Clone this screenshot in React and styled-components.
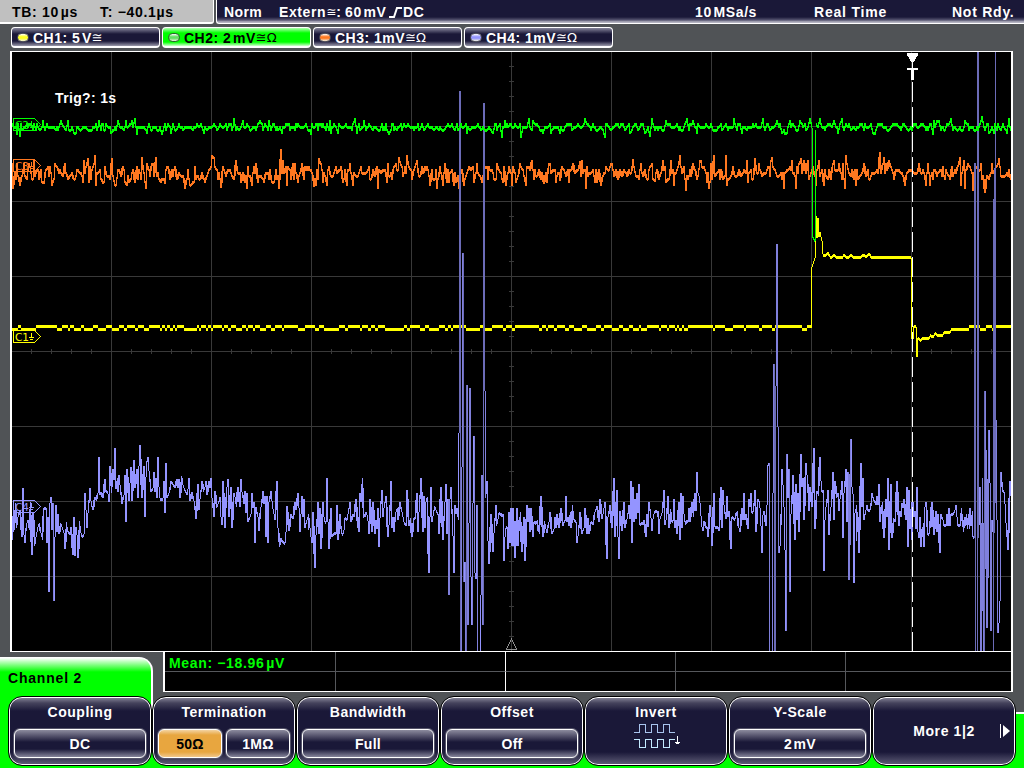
import React from "react";
import styled, { createGlobalStyle } from "styled-components";

const GlobalStyle = createGlobalStyle`
  * {
    box-sizing: border-box;
  }

  body {
    margin: 0;
    overflow: hidden;
    background: #505356;
    font-family: "Liberation Sans", Arial, sans-serif;
    font-size: 14px;
    font-weight: 700;
    color: white;
  }
`;

const Screen = styled.div`
  width: 1024px;
  height: 768px;
  background: #505356;
  display: flex;
  flex-direction: column;
  overflow: hidden;
`;

const TopBar = styled.header`
  display: flex;
  height: 24px;
  gap: 2px;
  white-space: pre;
`;

const TimeBase = styled.div`
  width: 214px;
  height: 24px;
  display: flex;
  align-items: center;
  padding: 2px 0 0 12px;
  background: #c0c0c0;
  color: black;
  border-right: 1px solid white;
  border-bottom: 2px solid white;
  border-bottom-right-radius: 3px;
`;

const Status = styled.div`
  flex: 1;
  display: flex;
  align-items: center;
  padding: 1px 0 0 7px;
  background: linear-gradient(#1a1838 17px, #565470 20px, #b5b4c2 22px);
  border-left: 1px solid white;
  border-bottom: 1px solid white;
  border-bottom-left-radius: 3px;
`;

const Item = styled.span`
  width: ${(p) => p.$w}px;
  flex: none;
  display: flex;
  align-items: center;
  letter-spacing: ${(p) => p.$ls || 0.6}px;
  line-height: 18px;
  height: 18px;
`;

const Tabs = styled.nav`
  display: flex;
  gap: 2px;
  padding: 3px 0 0 11px;
  height: 27px;
`;

const Tab = styled.div`
  width: 149px;
  height: 21px;
  display: flex;
  align-items: center;
  padding: 1px 0 0 5px;
  letter-spacing: 0.5px;
  white-space: pre;
  border: 1px solid white;
  border-bottom-width: 2px;
  border-radius: 4px;
  color: ${(p) => (p.$active ? "black" : "white")};
  background: ${(p) =>
    p.$active
      ? "linear-gradient(#b0ffb0, #00ff00 5px, #00ff00 14px, #d0ffd0)"
      : "linear-gradient(#85849a, #1a1838 6px, #1a1838 13px, #9a99ab)"};
`;

const Led = styled.i`
  width: 12px;
  height: 9px;
  margin-right: 4px;
  border: 1px solid ${(p) => (p.$active ? "#2c602c" : "#55555f")};
  border-radius: 5px;
  background: ${(p) =>
    `linear-gradient(white, ${p.$color} 40%, ${p.$color} 60%, #f0f0e0)`};
`;

const Sym = styled.span`
  font-family: "DejaVu Sans", sans-serif;
  font-weight: 400;
  font-size: ${(p) => p.$size || 13}px;
  letter-spacing: 0;
  line-height: 14px;
`;

const Display = styled.main`
  height: 601px;
  margin: 0 11px 0 10px;
  border: 2px solid white;
  border-top-width: 1px;
  border-bottom-width: 1px;
  background: black;
  position: relative;

  svg {
    display: block;
  }
`;

const Trig = styled.div`
  position: absolute;
  left: 43px;
  top: 38px;
  letter-spacing: 0.35px;
`;

const Bottom = styled.footer`
  flex: 1;
  display: flex;
  flex-direction: column;
`;

const MeasureRow = styled.div`
  display: flex;
  height: 40px;
  margin-right: 11px;
`;

const MenuTitle = styled.div`
  width: 153px;
  height: 60px;
  margin: 5px 10px 0 0;
  padding: 12px 0 0 8px;
  color: black;
  letter-spacing: 0.8px;
  border-top-right-radius: 14px;
  border-top: 1px solid white;
  border-right: 2px solid white;
  background: linear-gradient(white, #00ff00 14px);
`;

const Measures = styled.div`
  flex: 1;
  height: 40px;
  display: grid;
  grid-template-columns: 171px 170px 170px 170px 1fr;
  grid-template-rows: 20px 19px;
  background: black;
  border: 2px solid white;
  border-top: 0;
  border-bottom-width: 1px;
`;

const Cell = styled.div`
  border-right: ${(p) =>
    p.$last ? 0 : `1px solid ${p.$mid ? "white" : "#56585c"}`};
  border-bottom: ${(p) => (p.$top ? "1px solid #56585c" : 0)};
  padding: 3px 0 0 4px;
  color: #00ff00;
  letter-spacing: 0.65px;
  white-space: pre;
`;

const Menu = styled.div`
  flex: 1;
  display: flex;
  padding: 4px 0 0 8px;
  z-index: 1;
  background: linear-gradient(#00ff00, #00ff00) 0 0 / 8px 100% no-repeat,
    linear-gradient(#00ff00, #00ff00) 0 bottom / 1014px 16px no-repeat,
    linear-gradient(#505356 20px, white 20px, white 22px, #00ff00 22px) right 0 /
      10px 100% no-repeat,
    linear-gradient(#00ff00, #00ff00) 8px 0 / 143px 20px no-repeat;
`;

const Key = styled.section`
  width: 144px;
  height: 70px;
  flex: none;
  padding: 6px 5px 0;
  display: flex;
  flex-direction: column;
  align-items: center;
  border: 1px solid black;
  border-radius: 14px;
  letter-spacing: 0.55px;
  box-shadow: inset 0 0 0 1px white;
  background: linear-gradient(
    #8c8b9e,
    #45435c 6px,
    #1a1838 14px,
    #1a1838 55px,
    #62607a
  );
`;

const KeyTitle = styled.div`
  height: ${(p) => p.$h || 26}px;
  line-height: 18px;
`;

const Values = styled.div`
  display: flex;
  gap: 4px;
  width: 132px;
`;

const Value = styled.div`
  flex: 1;
  height: 29px;
  line-height: 28px;
  text-align: center;
  letter-spacing: 0.3px;
  white-space: pre;
  border: 1px solid white;
  border-radius: 6px;
  box-shadow: 0 0 0 1px #55546a;
  color: ${(p) => (p.$on ? "black" : "white")};
  background: ${(p) =>
    p.$on
      ? "linear-gradient(#f3d3a2, #e8a63f 5px, #e8a63f 22px, #f0c78b)"
      : "linear-gradient(#8c8b9e, #1a1838 12px, #1a1838 19px, #85849a)"};
`;

const More = styled.div`
  position: relative;
  width: 132px;
  height: 56px;
  line-height: 57px;
  text-align: center;
  letter-spacing: 0.6px;

  svg {
    position: absolute;
    right: 0;
    top: 20px;
  }
`;

// x,y pairs, three units to one pixel, relative to the block origin
const CH4_BLOCKS = [
  {
    x: 0,
    y: 420,
    pts: `36,360 40,265 42,330 47,250 50,325 54,290 60,270 66,350 69,203 72,345 75,370 80,310 85,300 88,330 92,245
    96,405 99,275 104,378 109,345 114,320 118,310 123,340 128,360 132,265 138,265 141,370 144,290 147,515 150,250
    153,230 156,330 159,250 162,542 165,350 168,255 171,335 174,283 177,343 182,310 187,322 192,340 195,388 199,305
    203,335 210,345 213,320 219,405 222,292 225,407 228,320 231,345 234,415 238,302 242,335 246,352 252,343 255,220
    258,270 261,325 265,265 270,203 274,255 279,270 284,230 290,243 294,220 297,112 300,225 305,215 309,235 315,176
    318,215 323,215 327,245 330,139 335,218 339,148 342,180 345,85 348,208 352,175 354,215 357,165 361,205 366,253
    372,225 375,165 378,307 381,148 387,243 390,190 393,140 396,243 402,121 405,205 411,148 414,235 417,139 420,76
    426,235 432,139 435,290 439,130 444,112 448,165 453,215 459,205 462,157 465,215 468,175 471,235 474,112 478,230
    484,243 489,235 492,184 495,280 498,130 501,235 507,220 513,184 518,190 525,205 531,176 534,205 537,176 540,235
    545,168 550,200 556,215 561,225 564,208 567,175 570,243 576,215 582,243 588,298 594,193 597,270 601,225 606,184
    610,215 615,200 618,184 621,225 627,184 630,205 633,175 636,235 642,290 645,212 650,265 655,250 660,230 663,290
    666,315 669,184 675,325 681,200 684,176 687,290 693,202 696,325 702,220 706,235 709,262 714,202 720,260 723,176
    726,215 732,253 735,212 738,280 741,220 744,307 750,290 753,283 756,220 759,265 762,247 765,370 768,260 774,290
    777,333 783,260 789,212 792,253 795,228 798,352 801,228 804,370 807,245 813,212 817,255 825,300 831,184 834,325
    838,380 843,355 849,368 856,370 858,337 861,257 867,333 873,283 879,297 885,245 888,270 894,220 898,280`,
  },
  {
    x: 300,
    y: 360,
    pts: `0,515 3,463 6,408 9,470 12,418 15,505 20,485 26,463 32,525 36,550 39,455 45,623 48,525 54,427 57,523 60,445
    63,568 69,427 73,485 78,487 81,355 84,487 87,568 93,445 96,532 101,518 108,523 111,436 114,541 120,463 125,523
    131,523 135,475 141,480 145,455 150,427 153,487 157,463 163,470 168,418 172,505 174,472 177,515 180,400 183,425
    187,355 191,475 198,455 203,470 207,523 210,418 216,515 219,427 225,523 228,480 231,508 234,445 237,560 241,445
    246,391 249,470 253,436 258,409 264,532 268,482 273,364 276,505 279,472 282,515 288,455 292,445 294,480 300,427
    306,455 312,487 318,497 321,391 327,497 332,475 336,532 342,473 347,478 351,400 354,515 358,437 363,355 369,515
    372,409 375,505 378,425 382,410 387,640 390,470 393,382 396,487 404,437 411,460 414,463 417,523 423,382 429,541
    434,445 438,373 441,523 444,418 447,704 450,418 453,382 458,490 462,640 465,436 468,463 471,445 475,480 477,220
    480,-807 483,885 486,320 489,-321 492,667 495,607 498,885 501,76 504,795 507,490 510,85 513,650 516,795 519,428
    522,229 525,640 528,658 531,436 534,885 541,885 543,706 546,346 549,795 552,-771 555,93 557,415 561,364 564,543
    567,613 573,463 579,577 583,500 588,436 590,497 598,455 604,470 609,463 612,604 616,508 621,500 624,568 627,455
    630,550 633,445 636,558 639,445 645,595 651,445 654,558 661,455 666,577 672,472 675,604 681,436 684,485 687,445
    690,515 693,445 699,532 702,485 706,495 712,480 718,523 723,409 729,532 733,482 741,520 747,487 750,455 756,523
    762,508 765,470 768,505 771,463 777,505 783,445 789,497 795,482 798,409 801,487 804,470 807,497 811,455 813,505
    817,436 822,480 828,487 831,550 835,520 840,455 846,523 852,505 855,445 861,523 864,475 867,523 873,485 880,495
    885,455 891,437 897,487`,
  },
  {
    x: 595,
    y: 430,
    pts: `15,208 21,268 30,217 36,386 39,262 45,226 51,295 57,145 60,322 66,181 69,322 72,386 75,244 81,304 87,217
    90,295 97,262 102,226 105,268 108,154 111,340 114,172 117,277 120,208 123,268 126,190 129,250 132,163 135,286
    141,277 144,286 147,270 153,322 156,253 159,290 162,217 167,250 171,304 175,255 180,244 186,244 189,260 190,244
    192,313 195,268 201,250 207,181 210,286 213,270 219,199 222,295 226,237 231,277 235,272 237,208 240,295 243,270
    246,313 252,217 255,331 258,190 261,295 264,199 268,268 272,286 276,270 279,277 282,235 285,277 291,217 296,260
    300,190 303,244 306,127 309,190 314,205 320,285 324,304 327,272 331,293 336,290 339,322 345,226 348,262 351,349
    357,190 360,290 363,295 369,290 372,304 378,172 381,295 384,181 388,240 393,268 396,199 399,260 402,244 408,358
    411,262 420,268 427,244 433,304`,
  },
  {
    x: 740,
    y: 420,
    pts: `0,335 6,265 9,299 12,220 15,299 18,282 24,326 27,238 30,262 33,220 36,280 40,275 45,211 48,335 53,238 59,245
    63,318 66,398 69,285 72,273 78,317 81,255 84,135 87,130 90,705 96,705 99,220 102,-168 105,705 107,40 111,-528
    114,20 117,398 121,370 126,148 130,210 134,310 138,632 141,103 144,235 147,148 150,515 153,282 159,166 165,361
    168,193 171,299 174,220 177,335 183,103 186,200 189,175 192,299 198,130 201,165 207,272 210,202 216,262 222,85
    225,326 230,212 236,227 240,112 243,184 246,215 249,211 252,452 255,300 258,262 264,210 267,344 273,262 279,157
    282,299 285,184 290,235 294,220 297,272 300,237 306,184 309,353 312,220 318,148 321,307 324,157 327,479 333,58
    336,200 340,230 342,488 345,280 350,256 357,398 363,130 366,262 369,175 372,299 377,275 381,256 384,272 391,270
    396,220 401,240 408,254 411,229 414,254 417,193 420,307 427,247 432,353 438,238 441,290 444,175 447,389 453,193
    456,353 460,295 465,307 471,184 477,317 480,272 483,290 486,250 489,265 492,238 498,299 501,202 504,380 507,211
    510,326 514,247 516,361 519,247 522,290 525,272 528,326 531,202 534,335 537,353 540,292 543,380 550,310 552,380
    555,260 558,247 564,344 569,343 571,262 573,320 576,247 582,344 588,274 591,335 594,283 600,398 603,283 609,300
    612,317 618,317 621,283 624,317 627,265 630,317 633,283 639,283 644,274 648,256 651,290 654,317 660,317 664,265
    667,290 670,335 675,290 677,317 680,283 683,326 686,283 688,326 690,265 693,317 697,274 699,350 702,353 704,-770
    706,-770 708,705 712,705 714,-1120 716,353 720,202 723,705 727,175 732,705 735,-87 741,623 747,30 750,190
    753,632 756,300 759,335 761,705 766,-1120 768,0 771,300 774,640 778,600 781,515 783,157 789,215 793,215 798,310
    804,389 810,184 812,228`,
  },
];

const CH4_POINTS = CH4_BLOCKS.flatMap((b) =>
  b.pts
    .trim()
    .split(/\s+/)
    .map((p) => p.split(",").map(Number))
    .map(([x, y]) => [b.x + x / 3, b.y + y / 3])
);

// one vertical bar for each pixel column that the line goes through,
// "bold" stretches the bars beside a turning point, "pad" is added at both ends
function toColumns(points, { bold = false, pad = 0 } = {}) {
  const cols = {};
  const add = (c, y) => {
    const v = cols[c] || [y, y];
    cols[c] = [Math.min(v[0], y), Math.max(v[1], y)];
  };
  for (let i = 1; i < points.length; i++) {
    const [x0, y0] = points[i - 1];
    const [x1, y1] = points[i];
    if (x1 <= x0) continue;
    const at = (x) => y0 + ((y1 - y0) * (x - x0)) / (x1 - x0);
    const last = Math.ceil(x1 - 0.01) - 1;
    for (let c = Math.floor(x0); c <= last; c++) {
      add(c, at(Math.max(c, x0)));
      add(c, at(Math.min(c + 1, x1)));
    }
    if (bold && x1 - x0 < 2.4) {
      const turn0 = i > 1 && (points[i - 2][1] - y0) * (y1 - y0) > 0;
      const turn1 =
        i + 1 < points.length && (points[i + 1][1] - y1) * (y0 - y1) > 0;
      if (turn0) add(Math.floor(x0), y0 + (y1 - y0) * 0.75);
      if (turn1) add(last, y1 - (y1 - y0) * 0.75);
    }
  }
  return Object.entries(cols).map(([c, [a, b]]) => {
    a -= pad;
    b += pad;
    if (b - a < 3) {
      const m = (a + b) / 2;
      a = m - 1.5;
      b = m + 1.5;
    }
    return [Number(c), Math.round(a), Math.round(b)];
  });
}

const toPath = (cols) =>
  cols.map(([x, a, b]) => `M${x} ${a}h1V${b}h-1z`).join("");

function random(seed) {
  let s = seed;
  return () => {
    s = (s * 1664525 + 1013904223) % 4294967296;
    return s / 4294967296;
  };
}

function noise(seed, base, spread, peaks, from = 12, to = 1011) {
  const rnd = random(seed);
  const pts = [];
  let x = from;
  while (x <= to) {
    let n = rnd() + rnd() + rnd() - 1.5;
    if (rnd() < 0.06) n *= 1.5;
    pts.push([x, base + Math.round((n * spread) / 3) * 3]);
    x += rnd() < 0.6 ? 1 : 2;
  }
  peaks.forEach(([px, py]) => {
    const i = pts.findIndex((p) => p[0] >= px);
    if (i > 0) pts[i][1] = py;
  });
  return pts;
}

const CH2_LEFT = noise(11, 127, 5, [[17, 134], [134, 119], [137, 134], [162, 134], [234, 119], [311, 134], [354, 119],
  [389, 134], [502, 137], [521, 137], [528, 119], [585, 119], [605, 137], [651, 119], [686, 119], [734, 119],
  [762, 119], [785, 134], [810, 119]], 12, 812);
const CH2_PULSE = [[812, 128], [812.9, 130], [813, 238], [815, 241], [815.2, 135], [816, 130]];
const CH2_RIGHT = noise(23, 127, 5, [[820, 119], [842, 119], [875, 134], [932, 134], [951, 119], [981, 117],
  [1008, 119]], 816);

const CH2 = [
  ...toColumns(CH2_LEFT, { pad: 1 }),
  ...toColumns(CH2_PULSE),
  ...toColumns(CH2_RIGHT, { pad: 1 }),
];

const CH3 = noise(37, 173, 12, [[13, 188], [20, 185], [43, 183], [55, 164], [88, 159], [95, 156], [103, 183],
  [112, 159], [115, 185], [165, 183], [212, 156], [221, 187], [247, 188], [272, 182], [280, 150], [314, 186],
  [319, 159], [347, 185], [378, 188], [400, 162], [407, 156], [442, 185], [459, 188], [463, 185], [516, 182],
  [544, 183], [560, 180], [580, 162], [633, 160], [654, 181], [680, 156], [686, 190], [709, 188], [714, 156],
  [726, 156], [754, 159], [800, 159], [824, 185], [845, 188], [846, 156], [880, 153], [904, 185], [925, 185],
  [957, 166], [973, 190], [984, 192], [999, 159]]);

function flat(seed, from, to, rate) {
  const rnd = random(seed);
  const cols = [];
  let x = from;
  while (x < to) {
    const low = rnd() < rate;
    const w = low ? 2 + Math.floor(rnd() * 2) : 2 + Math.floor(rnd() * 5);
    for (let i = 0; i < w && x < to; i++, x++) {
      cols.push([x, low ? 328 : 325, low ? 331 : 328]);
    }
  }
  return cols;
}

const CH1 = [
  ...flat(5, 12, 700, 0.5),
  ...flat(9, 700, 811, 0.2),
  ...toColumns([
    [811, 328], [811.9, 268], [812, 267], [813, 264], [815, 258], [815.6, 238], [816, 216], [817, 238], [818, 218],
    [819, 237], [820, 232], [821, 237], [822, 241], [823, 254],
  ]),
  ...toColumns(
    [
      [823, 255], [826, 255], [828, 252], [830, 257], [832, 257], [834, 254], [836, 257], [843, 257], [844, 254],
      [846, 257], [849, 257], [851, 254], [853, 257], [861, 257], [863, 254], [865, 257], [870, 254], [871, 257.5],
      [911, 257.5], [911.1, 259], [912, 339], [913, 339], [914, 326], [916, 327], [917, 357], [918, 338], [921, 341],
      [922, 338.5], [929, 338.5], [930, 335.5], [933, 337], [936, 332.5], [937, 335.5], [943, 335], [944, 332.5],
      [950, 332.5], [951, 329.5], [966, 329.5],
    ],
    { bold: true }
  ),
  ...flat(14, 966, 1011, 0.35),
];

const CH4 = toColumns(CH4_POINTS, { bold: true });

const range = (n, f) => Array.from({ length: n }, (_, i) => f(i));

const Marker = ({ y, color, label }) => (
  <g stroke={color} fill="none">
    <path d={`M13.5 ${y + 0.5}h21l6 6l-6 6h-21z`} />
    <text
      x="15"
      y={y + 10.5}
      fill={color}
      stroke="none"
      fontSize="10.5"
      fontWeight="400"
      fontFamily="DejaVu Sans, sans-serif"
    >
      {label}
    </text>
    <path d={`M29 ${y + 7.5}h5M31.5 ${y + 3}v4M30 ${y + 9.5}h3`} />
  </g>
);

const Waveforms = () => (
  <svg width="999" height="599" viewBox="12 52 999 599" shapeRendering="crispEdges">
    <g fill="#393939">
      {range(9, (i) => (
        <rect key={i} x={111 + i * 100} y="52" width="1" height="599" />
      ))}
      {range(7, (i) => (
        <rect key={i} x="12" y={126 + i * 75} width="999" height="1" />
      ))}
      {range(39, (i) => (
        <rect key={i} x="509" y={66 + i * 15} width="5" height="1" />
      ))}
      {range(49, (i) => (
        <rect key={i} x={31 + i * 20} y="349" width="1" height="5" />
      ))}
    </g>
    <path d="M506 649.5h11M506.5 649l5-10l5 10" stroke="#909090" fill="none" />
    <path d={toPath(toColumns(CH3, { bold: true, pad: 1 }))} fill="#ff7820" />
    <path d={toPath(CH1)} fill="#ffff00" />
    <path d={toPath(CH4.filter((c) => c[2] - c[1] > 250))} fill="#6c6cb8" />
    <path
      d={toPath(CH4.filter((c) => c[2] - c[1] <= 250 && c[2] - c[1] > 90))}
      fill="#8080dc"
    />
    <path d={toPath(CH4.filter((c) => c[2] - c[1] <= 90))} fill="#9494ff" />
    <path d={toPath(CH2)} fill="#00ff00" />
    <Marker y={118} color="#00ff00" label="C2" />
    <Marker y={159} color="#ff7820" label="C3" />
    <Marker y={330} color="#ffff00" label="C1" />
    <Marker y={500} color="#9494ff" label="C4" />
    <path d="M912.5 82V651" stroke="white" strokeDasharray="20 5" />
    <path d="M907 53h11v2l-5 8h-1l-5-8z" fill="white" />
    <path d="M907 68h11v2h-4v10h-3v-10h-4zM912 60h1v9h-1z" fill="white" />
  </svg>
);

const Slope = () => (
  <svg width="14" height="12" viewBox="0 0 14 12" fill="none" stroke="white" strokeWidth="2">
    <path d="M0 11h5L8 2h5" />
  </svg>
);

const InvertIcon = () => (
  <svg width="49" height="28" viewBox="-2 0 49 28" fill="none" shapeRendering="crispEdges">
    <path
      d="M0 10.5h5.5v-8h6v8h6v-8h6v8h6v-8h6v8h5"
      stroke="#a9c4ee"
    />
    <path
      d="M0 17.5h5.5v8h6v-8h6v8h6v-8h6v8h6v-8h5"
      stroke="#c4eaff"
    />
    <path d="M43.5 14v8M41 20.5h5M42 21.5h3" stroke="white" />
  </svg>
);

const channels = [
  { name: "CH1: 5\u200aV", color: "#ffff20", symbols: "≅" },
  { name: "CH2: 2\u200amV", color: "#60e060", symbols: "≅Ω", active: true },
  { name: "CH3: 1mV", color: "#ff7820", symbols: "≅Ω" },
  { name: "CH4: 1mV", color: "#9494ff", symbols: "≅Ω" },
];

const Softkey = ({ title, values = [], on }) => (
  <Key>
    <KeyTitle>{title}</KeyTitle>
    <Values>
      {values.map((v) => (
        <Value key={v} $on={v === on}>
          {v}
        </Value>
      ))}
    </Values>
  </Key>
);

export default function App() {
  return (
    <Screen>
      <GlobalStyle />
      <TopBar>
        <TimeBase>
          <Item $w={88} $ls={0.7}>{"TB: 10\u200aµs"}</Item>
          <Item $w={100} $ls={0.7}>T: −40.1µs</Item>
        </TimeBase>
        <Status>
          <Item $w={55} $ls={0.4}>Norm</Item>
          <Item $w={66}>
            Extern<Sym $size={12}>≅</Sym>:
          </Item>
          <Item $w={44}>{"60\u200amV"}</Item>
          <Slope />
          <Item $w={292}>DC</Item>
          <Item $w={119}>{"10\u200aMSa/s"}</Item>
          <Item $w={138} $ls={0.8}>Real Time</Item>
          <Item $w={66} $ls={0.75}>Not Rdy.</Item>
        </Status>
      </TopBar>
      <Tabs>
        {channels.map((c) => (
          <Tab key={c.name} $active={c.active}>
            <Led $color={c.color} $active={c.active} />
            {c.name}
            <Sym>{c.symbols}</Sym>
          </Tab>
        ))}
      </Tabs>
      <Display>
        <Waveforms />
        <Trig>Trig?: 1s</Trig>
      </Display>
      <Bottom>
        <MeasureRow>
          <MenuTitle>Channel 2</MenuTitle>
          <Measures>
            <Cell $top>{"Mean: −18.96\u200aµV"}</Cell>
            <Cell $top $mid />
            <Cell $top />
            <Cell $top />
            <Cell $top $last />
            <Cell />
            <Cell $mid />
            <Cell />
            <Cell />
            <Cell $last />
          </Measures>
        </MeasureRow>
        <Menu>
          <Softkey title="Coupling" values={["DC"]} />
          <Softkey title="Termination" values={["50Ω", "1MΩ"]} on="50Ω" />
          <Softkey title="Bandwidth" values={["Full"]} />
          <Softkey title="Offset" values={["Off"]} />
          <Key>
            <KeyTitle $h={19}>Invert</KeyTitle>
            <InvertIcon />
          </Key>
          <Softkey title="Y-Scale" values={["2\u200amV"]} />
          <Key>
            <More>
              More 1|2
              <svg width="10" height="16" viewBox="0 0 10 16">
                <path d="M0.5 1v14" stroke="white" />
                <path d="M3 2l7 6l-7 6z" fill="white" />
              </svg>
            </More>
          </Key>
        </Menu>
      </Bottom>
    </Screen>
  );
}
